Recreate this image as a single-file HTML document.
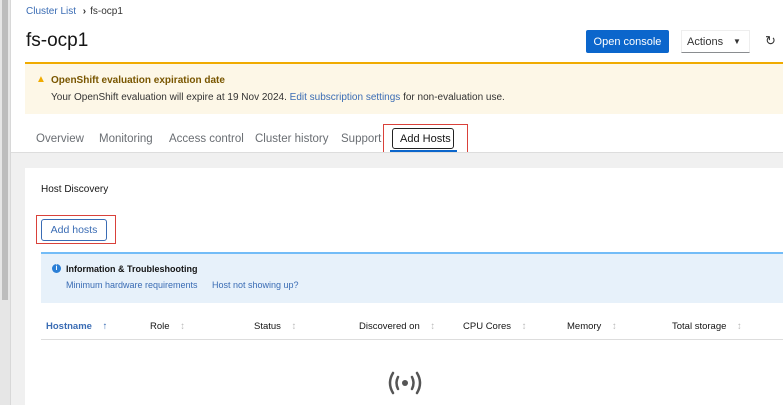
<!DOCTYPE html>
<html><head><style>
*{margin:0;padding:0;box-sizing:border-box}
body{width:783px;height:410px;overflow:hidden;background:#fff;font-family:"Liberation Sans",sans-serif;position:relative;color:#151515}
.a{position:absolute;white-space:nowrap}
</style></head><body>
<div class="a" style="left:0;top:0;width:10px;height:405px;background:#e6e6e6"></div>
<div class="a" style="left:2px;top:0;width:6px;height:300px;background:#bdbdbd"></div>
<div class="a" style="left:10px;top:0;width:1px;height:405px;background:#d8d8d8"></div>
<div class="a" style="left:26px;top:6px;font-size:10px;color:#3a6cb4">Cluster List <span style="color:#333;font-weight:bold;margin:0 4px">›</span><span style="color:#333">fs-ocp1</span></div>
<div class="a" style="left:26px;top:30px;font-size:19px">fs-ocp1</div>
<div class="a" style="left:586px;top:30px;width:83px;height:23px;background:#0b66cc;border-radius:2px;color:#fff;font-size:11px;line-height:24px;text-align:center">Open console</div>
<div class="a" style="left:681px;top:30px;width:69px;height:23px;border:1px solid #eee;border-bottom:1px solid #8a8d90;font-size:11px;line-height:22px;padding-left:5px;color:#333">Actions <span style="position:absolute;left:51px;font-size:8px">▼</span></div>
<div class="a" style="left:765px;top:33px;font-size:13px;color:#333">↻</div>
<div class="a" style="left:25px;top:62px;width:758px;height:52px;background:#fdf7e7;border-top:2px solid #f0ab00"></div>
<div class="a" style="left:36px;top:74px;font-size:10px;color:#f0ab00">▲</div>
<div class="a" style="left:51px;top:75px;font-size:10px;font-weight:bold;color:#795600">OpenShift evaluation expiration date</div>
<div class="a" style="left:51px;top:92px;font-size:10px;color:#333">Your OpenShift evaluation will expire at 19 Nov 2024. <span style="color:#3a6cb4">Edit subscription settings</span> for non-evaluation use.</div>
<div class="a" style="left:36px;top:133px;font-size:11.5px;color:#6a6e73">Overview</div>
<div class="a" style="left:99px;top:133px;font-size:11.5px;color:#6a6e73">Monitoring</div>
<div class="a" style="left:169px;top:133px;font-size:11.5px;color:#6a6e73">Access control</div>
<div class="a" style="left:255px;top:133px;font-size:11.5px;color:#6a6e73">Cluster history</div>
<div class="a" style="left:341px;top:133px;font-size:11.5px;color:#6a6e73">Support</div>
<div class="a" style="left:383px;top:124px;width:85px;height:33px;border:1px solid #d9413a"></div>
<div class="a" style="left:392px;top:128px;width:62px;height:21px;border:1.5px solid #222;border-radius:3px;font-size:11px;line-height:20px;padding-left:7px">Add Hosts</div>
<div class="a" style="left:390px;top:150px;width:67px;height:2px;background:#0b66cc"></div>
<div class="a" style="left:11px;top:152px;width:772px;height:258px;background:#f0f0f0;border-top:1px solid #ddd"></div>
<div class="a" style="left:25px;top:168px;width:758px;height:237px;background:#fff"></div>
<div class="a" style="left:0;top:405px;width:783px;height:5px;background:#fff"></div>
<div class="a" style="left:41px;top:184px;font-size:10px">Host Discovery</div>
<div class="a" style="left:36px;top:215px;width:80px;height:29px;border:1px solid #d9413a"></div>
<div class="a" style="left:41px;top:219px;width:66px;height:22px;border:1px solid #3a6cb4;border-radius:3px;font-size:10.5px;color:#3a6cb4;line-height:21px;text-align:center">Add hosts</div>
<div class="a" style="left:41px;top:252px;width:742px;height:51px;background:#e7f1fa;border-top:2px solid #73bcf7"></div>
<div class="a" style="left:52px;top:264px;width:9px;height:9px;border-radius:50%;background:#2b7fd6;color:#fff;font-size:7px;line-height:9px;text-align:center;font-weight:bold">i</div>
<div class="a" style="left:66px;top:264px;font-size:9px;font-weight:bold">Information &amp; Troubleshooting</div>
<div class="a" style="left:66px;top:280px;font-size:9px;color:#3a6cb4">Minimum hardware requirements</div>
<div class="a" style="left:212px;top:280px;font-size:9px;color:#3a6cb4">Host not showing up?</div>
<div class="a" style="left:46px;top:321px;font-size:9.5px;color:#3a6cb4;font-weight:bold">Hostname <span style="margin-left:8px">↑</span></div>
<div class="a" style="left:150px;top:321px;font-size:9.5px">Role <span style="color:#bbb;margin-left:8px">↕</span></div>
<div class="a" style="left:254px;top:321px;font-size:9.5px">Status <span style="color:#bbb;margin-left:8px">↕</span></div>
<div class="a" style="left:359px;top:321px;font-size:9.5px">Discovered on <span style="color:#bbb;margin-left:8px">↕</span></div>
<div class="a" style="left:463px;top:321px;font-size:9.5px">CPU Cores <span style="color:#bbb;margin-left:8px">↕</span></div>
<div class="a" style="left:567px;top:321px;font-size:9.5px">Memory <span style="color:#bbb;margin-left:8px">↕</span></div>
<div class="a" style="left:672px;top:321px;font-size:9.5px">Total storage <span style="color:#bbb;margin-left:8px">↕</span></div>
<div class="a" style="left:41px;top:339px;width:742px;height:1px;background:#ddd"></div>
<svg class="a" style="left:387px;top:370px" width="36" height="26" viewBox="0 0 36 26"><g fill="none" stroke="#555" stroke-width="2.5" stroke-linecap="round"><path d="M6 3 Q0 13 6 23"/><path d="M30 3 Q36 13 30 23"/><path d="M11 7 Q8 13 11 19"/><path d="M25 7 Q28 13 25 19"/></g><circle cx="18" cy="13" r="3" fill="#555"/></svg>
</body></html>
